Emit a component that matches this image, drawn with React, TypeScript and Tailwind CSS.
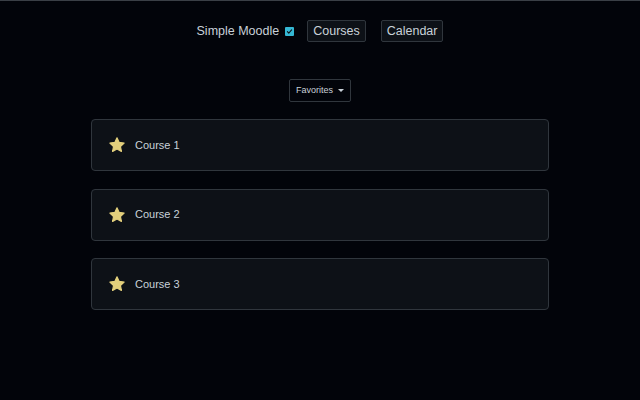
import React from "react";

function Star() {
  return (
    <svg width="18" height="18" viewBox="0 0 24 24" className="shrink-0">
      <path
        d="M12 2.5l2.9 6.1 6.6.8-4.9 4.6 1.3 6.6L12 17.3l-5.9 3.3 1.3-6.6-4.9-4.6 6.6-.8z"
        fill="#e2cf7c"
        stroke="#e2cf7c"
        strokeWidth="1.6"
        strokeLinejoin="round"
      />
    </svg>
  );
}

function Checkbox() {
  return (
    <span className="inline-flex h-[9px] w-[9px] items-center justify-center rounded-[1px] bg-[#35b8d4]">
      <svg width="7" height="7" viewBox="0 0 10 10">
        <path d="M2 5.2l2 2 4-4.4" fill="none" stroke="#0d1117" strokeWidth="1.6" strokeLinecap="round" strokeLinejoin="round" />
      </svg>
    </span>
  );
}

const courses = ["Course 1", "Course 2", "Course 3"];

export default function App() {
  return (
    <div
      className="h-[400px] w-full border-t border-[#3a3f46] bg-[#02040a] text-[#c9d1d9]"
      style={{ fontFamily: '"Liberation Sans", Arial, sans-serif' }}
    >
      {/* top nav */}
      <nav className="mt-[19px] flex items-center justify-center text-[12.5px]">
        <span className="text-[#c9d1d9]">Simple Moodle</span>
        <span className="ml-[6px] mr-[13px] flex">
          <Checkbox />
        </span>
        <button className="h-[22px] rounded-[2px] border border-[#30363d] bg-[#0d1117] px-[5px] text-[#c9d1d9]">
          Courses
        </button>
        <button className="ml-[15px] h-[22px] rounded-[2px] border border-[#30363d] bg-[#0d1117] px-[5px] text-[#c9d1d9]">
          Calendar
        </button>
      </nav>

      <div className="mt-[37px] flex justify-center">
        <button className="flex h-[23px] w-[62px] items-center justify-center gap-[5px] rounded-[2px] border border-[#30363d] bg-[#02040a] text-[9px] text-[#c9d1d9]">
          Favorites
          <span className="h-0 w-0 border-x-[3px] border-t-[3px] border-x-transparent border-t-[#c9d1d9]" />
        </button>
      </div>

      <div className="mx-auto mt-[17px] flex w-[458px] flex-col gap-[17.5px]">
        {courses.map((c) => (
          <div
            key={c}
            className="flex h-[52px] items-center gap-[9px] rounded-[4px] border border-[#30363d] bg-[#0d1117] pl-[16px] text-[11px] text-[#c9d1d9]"
          >
            <Star />
            <span>{c}</span>
          </div>
        ))}
      </div>
    </div>
  );
}
